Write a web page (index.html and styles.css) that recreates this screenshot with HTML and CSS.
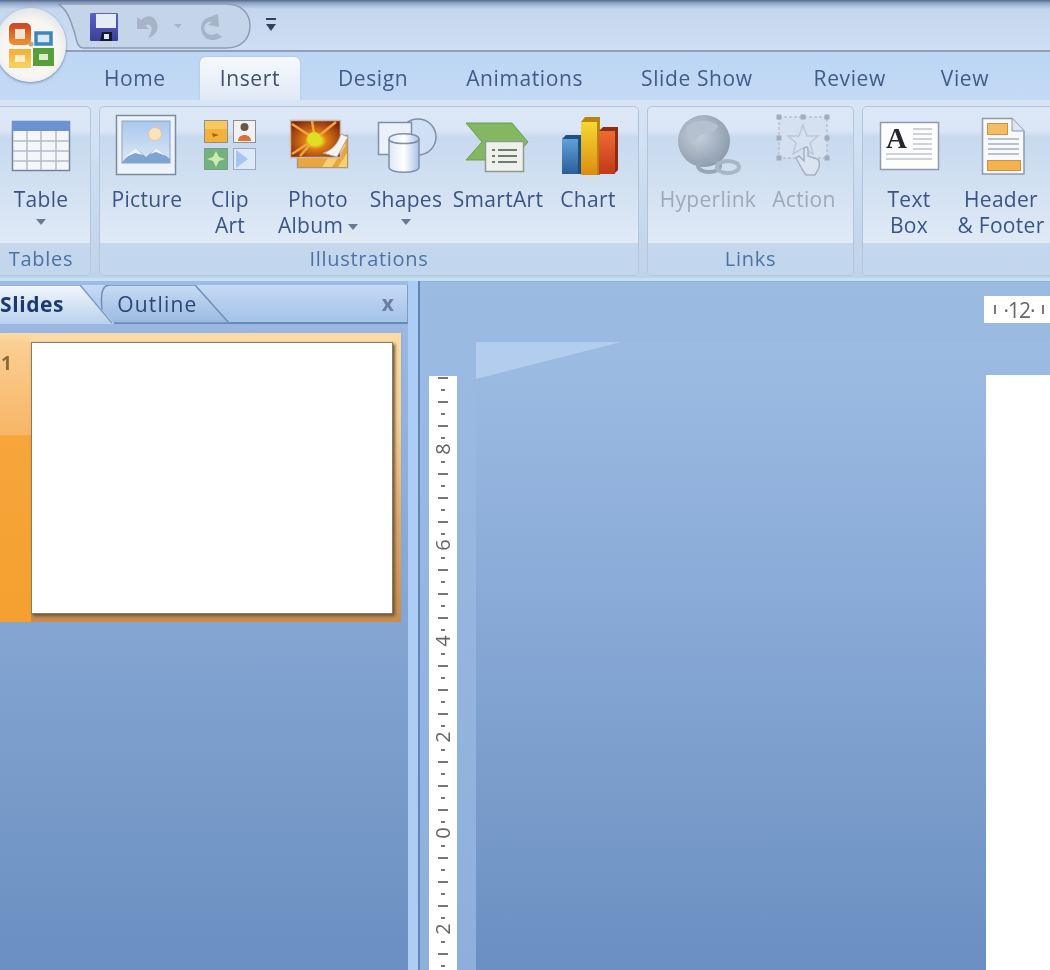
FILE: index.html
```html
<!DOCTYPE html>
<html lang="en">

<head>
    <meta charset="UTF-8">
    <title>Presentation - PowerPoint</title>
    <link rel="stylesheet" href="styles.css">
</head>

<body>
    <div class="app">
        <!-- title bar -->
        <div class="titlebar">
            <svg class="qat-shape" width="300" height="52" viewBox="0 0 300 52">
                <defs>
                    <linearGradient id="floppy" x1="0" y1="0" x2="0" y2="1">
                        <stop offset="0" stop-color="#5a62c4" />
                        <stop offset="1" stop-color="#3d3f96" />
                    </linearGradient>
                </defs>
                <path d="M58 4 H226 C242 4 250 14 250 26 C250 38 242 48 226 48 H84 C76 48 77 38 73 28 C70 18 66 8 58 4 Z" fill="#c4d5ea" stroke="#8c9cb4" stroke-width="1.5" />
                <!-- save -->
                <rect x="90" y="13" width="28" height="28" rx="1" fill="url(#floppy)" />
                <rect x="96" y="14" width="20" height="14" fill="#e6ecf6" />
                <path d="M100 41 L102 32 H112 V41 Z" fill="#15182e" />
                <rect x="104" y="34" width="5" height="5" fill="#dfe4ee" />
                <!-- undo -->
                <path d="M137 17 V29 H149 L145 25 C150 23 153 27 151 32 L148 38 C156 36 160 28 156 21 C153 15 146 15 141 20 Z" fill="#a7b4c7" />
                <path d="M174 24 H182 L178 28 Z" fill="#a9b6c8" />
                <!-- redo -->
                <path d="M218 14 L219 27 L208 25 L212 22 C206 21 203 26 205 31 C207 35 213 36 217 33 L222 37 C215 42 205 41 202 33 C199 25 203 18 210 17 Z" fill="#a7b4c7" />
                <!-- customize -->
                <rect x="266" y="18" width="10" height="2" fill="#33415c" />
                <path d="M266 24 H276 L271 31 Z" fill="#33415c" />
            </svg>
        </div>
        <div class="orb">
            <svg width="48" height="50" viewBox="0 0 48 50">
                <defs>
                    <linearGradient id="orbred" x1="0" y1="0" x2="0" y2="1">
                        <stop offset="0" stop-color="#cf4a26" />
                        <stop offset="1" stop-color="#ee8a2c" />
                    </linearGradient>
                    <linearGradient id="orbyel" x1="0" y1="0" x2="0" y2="1">
                        <stop offset="0" stop-color="#f3b23a" />
                        <stop offset="1" stop-color="#f6d05e" />
                    </linearGradient>
                </defs>
                <rect x="5" y="6" width="16" height="16" rx="2" fill="#f3e3d2" stroke="url(#orbred)" stroke-width="6" />
                <rect x="29" y="13" width="15" height="11" fill="#dbe8f1" stroke="#3f86bd" stroke-width="3.500" />
                <rect x="5" y="32" width="16" height="13" fill="#faeecb" stroke="url(#orbyel)" stroke-width="6" />
                <rect x="29" y="31" width="15" height="12" fill="#dcedcf" stroke="#55a03a" stroke-width="6" />
                <circle cx="24" cy="24" r="2.500" fill="#b6a58a" />
            </svg>
        </div>

        <div class="tabs">
            <span class="tab tab-home">Home</span>
            <span class="tab active">Insert</span>
            <span class="tab">Design</span>
            <span class="tab">Animations</span>
            <span class="tab">Slide Show</span>
            <span class="tab tab-review">Review</span>
            <span class="tab">View</span>
        </div>

        <!-- ribbon -->
        <div class="ribbon">
            <div class="group group-tables">
                <div class="buttons">
                    <div class="btn w82">
                        <svg class="ico" width="82" height="70" viewBox="0 110 82 70">
                            <rect x="12.500" y="121.500" width="57" height="49" fill="#f4f6f9" stroke="#76849a" stroke-width="1.500" />
                            <rect x="12" y="121" width="58" height="10" fill="#6b92d2" />
                            <path d="M27 131 V170 M41 131 V170 M56 131 V170 M13 141 H69 M13 151 H69 M13 161 H69" stroke="#b3bcc9" stroke-width="1.500" fill="none" />
                        </svg>
                        <div class="txt">Table</div>
                        <div class="arrow"></div>
                    </div>
                </div>
                <div class="label">Tables</div>
            </div>

            <div class="group group-illus">
                <div class="buttons">
                    <div class="btn w78">
                        <svg class="ico" width="78" height="70" viewBox="108 110 78 70">
                            <defs>
                                <linearGradient id="pic" x1="0" y1="0" x2="0" y2="1">
                                    <stop offset="0" stop-color="#a9c8ec" />
                                    <stop offset="1" stop-color="#dbe8f6" />
                                </linearGradient>
                            </defs>
                            <rect x="116.500" y="115.500" width="59" height="59" fill="#edf3fa" stroke="#7d8a9c" stroke-width="1.500" />
                            <rect x="122" y="121" width="48" height="42" fill="url(#pic)" stroke="#8da3bd" />
                            <circle cx="155" cy="134" r="6.500" fill="#f9e3c0" stroke="#eec48f" />
                            <path d="M122 162 L136 148 L146 157 L156 148 L170 159 V163 H122 Z" fill="#7fa4d4" />
                            <path d="M124 158 L136 148 L143 155 L135 153 Z M150 154 L156 148 L166 156 L156 152 Z" fill="#eef4fb" />
                        </svg>
                        <div class="txt">Picture</div>
                    </div>
                    <div class="btn w88">
                        <svg class="ico" width="88" height="70" viewBox="186 110 88 70">
                            <rect x="204.500" y="120.500" width="23" height="22" fill="#f3b13e" stroke="#8d8f88" />
                            <rect x="205" y="121" width="22" height="8" fill="#f8c862" />
                            <path d="M212 133 L219 135 L213 137 Z" fill="#b85a14" />
                            <rect x="233.500" y="120.500" width="22" height="22" fill="#f0f1f2" stroke="#8d8f88" />
                            <circle cx="244.500" cy="127" r="4" fill="#6b5347" />
                            <path d="M238 141 C238 133 251 133 251 141 Z" fill="#d9713a" />
                            <rect x="204.500" y="148.500" width="23" height="21" fill="#71b37c" stroke="#7f9a86" />
                            <path d="M216 151 L219 157 L225 159 L219 161 L216 167 L213 161 L207 159 L213 157 Z" fill="#cfe9b0" />
                            <rect x="233.500" y="148.500" width="22" height="21" fill="#dbe8f8" stroke="#9aa9bc" />
                            <path d="M236 150 L248 159 L236 168 Z" fill="#a8c5ec" />
                        </svg>
                        <div class="txt">Clip<br>Art</div>
                    </div>
                    <div class="btn w88">
                        <svg class="ico" width="88" height="70" viewBox="274 110 88 70">
                            <defs>
                                <radialGradient id="burst" cx="0.5" cy="0.55" r="0.7">
                                    <stop offset="0.18" stop-color="#dcdb22" />
                                    <stop offset="0.32" stop-color="#e07b16" />
                                    <stop offset="0.9" stop-color="#7e2410" />
                                </radialGradient>
                            </defs>
                            <rect x="297.500" y="135.500" width="50" height="32" fill="#e8a63c" stroke="#a99b78" stroke-width="1.500" />
                            <path d="M322 167 L340 140 L346 145 L332 167 Z M338 167 L347 153 V167 Z" fill="#f6cf6e" />
                            <rect x="290.500" y="120.500" width="50" height="37" fill="url(#burst)" stroke="#cdb9ac" stroke-width="1.500" />
                            <path d="M315 139 L292 124 M315 139 L312 121 M315 139 L336 122 M315 139 L292 154 M315 139 L300 156" stroke="#f0a73a" stroke-width="2.500" />
                            <circle cx="314" cy="139" r="7" fill="#dfdf24" />
                            <path d="M341 134 L348 137 L337 157 L323 153 C333 150 338 143 341 134 Z" fill="#f3f3f0" stroke="#a9a9a4" />
                        </svg>
                        <div class="txt">Photo<br>Album<i class="arrow-in"></i></div>
                    </div>
                    <div class="btn w88">
                        <svg class="ico" width="88" height="70" viewBox="362 110 88 70">
                            <defs>
                                <linearGradient id="cyl" x1="0" y1="0" x2="1" y2="0">
                                    <stop offset="0" stop-color="#dce8f6" />
                                    <stop offset="0.5" stop-color="#ffffff" />
                                    <stop offset="1" stop-color="#a6c2e6" />
                                </linearGradient>
                            </defs>
                            <circle cx="418" cy="137" r="18" fill="#cfe0f5" stroke="#808fa3" stroke-width="1.500" />
                            <rect x="378.500" y="122.500" width="33" height="32" fill="#eaf1fa" stroke="#808fa3" stroke-width="1.500" />
                            <path d="M389 139 C389 132 419 132 419 139 V167 C419 174 389 174 389 167 Z" fill="url(#cyl)" stroke="#808fa3" stroke-width="1.500" />
                            <path d="M389 139 C389 145 419 145 419 139" fill="none" stroke="#808fa3" stroke-width="1.500" />
                        </svg>
                        <div class="txt">Shapes</div>
                        <div class="arrow"></div>
                    </div>
                    <div class="btn w96">
                        <svg class="ico" width="96" height="70" viewBox="450 110 96 70">
                            <path d="M466 123 H512 L528 142 L512 160 H466 L482 142 Z" fill="#83b762" stroke="#6f9c55" />
                            <rect x="485.500" y="141.500" width="38" height="30" fill="#eef1ea" stroke="#8f9a8f" stroke-width="1.500" />
                            <path d="M492 150 H495 M498 150 H517 M492 156 H495 M498 156 H517 M492 162 H495 M498 162 H517" stroke="#6f7a74" stroke-width="2" />
                        </svg>
                        <div class="txt">SmartArt</div>
                    </div>
                    <div class="btn w84">
                        <svg class="ico" width="84" height="70" viewBox="546 110 84 70">
                            <defs>
                                <linearGradient id="bar1" x1="0" y1="0" x2="0" y2="1">
                                    <stop offset="0" stop-color="#5f9fdc" />
                                    <stop offset="1" stop-color="#2b5f96" />
                                </linearGradient>
                                <linearGradient id="bar2" x1="0" y1="0" x2="0" y2="1">
                                    <stop offset="0" stop-color="#f6d634" />
                                    <stop offset="1" stop-color="#dd8d10" />
                                </linearGradient>
                                <linearGradient id="bar3" x1="0" y1="0" x2="0" y2="1">
                                    <stop offset="0" stop-color="#ef6a32" />
                                    <stop offset="1" stop-color="#c2381a" />
                                </linearGradient>
                            </defs>
                            <path d="M562 139 L566 135 H582 V174 H562 Z" fill="#1f4f80" />
                            <rect x="562" y="139" width="16" height="35" fill="url(#bar1)" />
                            <path d="M581 122 L585 117 H600 V175 H581 Z" fill="#b8860c" />
                            <rect x="581" y="122" width="16" height="53" fill="url(#bar2)" />
                            <path d="M599 131 L603 127 H618 L618 170 L614 174 H599 Z" fill="#8f2c16" />
                            <rect x="599" y="131" width="16" height="43" fill="url(#bar3)" />
                        </svg>
                        <div class="txt">Chart</div>
                    </div>
                </div>
                <div class="label">Illustrations</div>
            </div>

            <div class="group group-links">
                <div class="buttons">
                    <div class="btn w104 off">
                        <svg class="ico" width="104" height="70" viewBox="654 110 104 70">
                            <defs>
                                <radialGradient id="globe" cx="0.4" cy="0.4" r="0.7">
                                    <stop offset="0" stop-color="#c7d0dc" />
                                    <stop offset="1" stop-color="#8796a9" />
                                </radialGradient>
                            </defs>
                            <circle cx="702" cy="141" r="26" fill="url(#globe)" />
                            <path d="M684 128 C692 120 708 118 716 126 C712 136 702 130 696 138 C692 146 688 140 684 128 Z" fill="#b6c1cf" />
                            <ellipse cx="707" cy="166" rx="11" ry="6" fill="none" stroke="#98a6b8" stroke-width="4" />
                            <ellipse cx="726" cy="167" rx="11" ry="6" fill="none" stroke="#a9b6c6" stroke-width="4" />
                        </svg>
                        <div class="txt">Hyperlink</div>
                    </div>
                    <div class="btn w88 off">
                        <svg class="ico" width="88" height="70" viewBox="758 110 88 70">
                            <rect x="777" y="117" width="48" height="41" fill="#d5e1f0" stroke="#a6b2c2" stroke-dasharray="3 2" />
                            <path d="M801 125 L805 136 L816 136 L808 143 L811 154 L801 148 L791 154 L794 143 L786 136 L797 136 Z" fill="none" stroke="#bcc8d7" stroke-width="1.500" />
                            <path d="M777 117 h.01 M801 117 h.01 M825 117 h.01 M777 138 h.01 M825 138 h.01 M777 158 h.01 M825 158 h.01" stroke="#a0adbe" stroke-width="5" stroke-linecap="square" />
                            <path d="M800 169 L794 158 L797 156 L802 161 V150 C802 146 806 146 806 150 V156 L815 159 C818 160 818 166 816 170 L813 175 H804 Z" fill="#dbe5f1" stroke="#a6b2c2" stroke-width="1.500" />
                        </svg>
                        <div class="txt">Action</div>
                    </div>
                </div>
                <div class="label">Links</div>
            </div>

            <div class="group group-text">
                <div class="buttons">
                    <div class="btn w76">
                        <svg class="ico" width="76" height="70" viewBox="870 110 76 70">
                            <rect x="879.500" y="122.500" width="58" height="47" fill="#fdfdfd" stroke="#8e9aab" stroke-width="1.500" />
                            <path d="M912 129 H931 M912 134 H931 M912 139 H931 M912 144 H931 M912 149 H931 M885 154 H931 M885 159 H931" stroke="#bfc5cd" stroke-width="1.500" />
                            <text x="885" y="148" class="big-a">A</text>
                        </svg>
                        <div class="txt">Text<br>Box</div>
                    </div>
                    <div class="btn w108">
                        <svg class="ico" width="104" height="70" viewBox="946 110 104 70">
                            <path d="M981.500 118.500 H1011 L1023 131 V174 H981.500 Z" fill="#f7f9fc" stroke="#8e9aab" stroke-width="1.500" />
                            <path d="M1011 118.500 V131 H1023" fill="#dfe6ef" stroke="#8e9aab" />
                            <path d="M987 139 H1018 M987 144 H1018 M987 149 H1018 M987 154 H1018" stroke="#a8afb9" stroke-width="1.500" />
                            <rect x="986.500" y="123.500" width="20" height="11" fill="#f4bd63" stroke="#c89344" />
                            <rect x="986.500" y="160.500" width="33" height="10" fill="#f4b251" stroke="#c89344" />
                        </svg>
                        <div class="txt">Header<br>&amp; Footer</div>
                    </div>
                </div>
                <div class="label"></div>
            </div>
        </div>

        <!-- slide panel and canvas -->
        <div class="work">
            <div class="panel">
                <div class="panel-head">
                    <svg class="panel-tabs" width="240" height="39" viewBox="0 0 240 39">
                        <defs>
                            <linearGradient id="tabon" x1="0" y1="0" x2="0" y2="1">
                                <stop offset="0" stop-color="#f2f7fd" />
                                <stop offset="1" stop-color="#b9d1ee" />
                            </linearGradient>
                            <linearGradient id="taboff" x1="0" y1="0" x2="0" y2="1">
                                <stop offset="0" stop-color="#c8dcf5" />
                                <stop offset="1" stop-color="#9ab8df" />
                            </linearGradient>
                        </defs>
                        <path d="M104 39 C103 30 100 20 102 8 C103 3 105 0 110 0 H195 L229 38 H114 Z" fill="url(#taboff)" stroke="#6f8fb9" stroke-width="1.500" />
                        <path d="M-2 0 H80 L114 38 V39 H-2 Z" fill="url(#tabon)" />
                        <path d="M0 0 H80 L112 38" fill="none" stroke="#7f9cc2" stroke-width="1.500" />
                    </svg>
                    <span class="ptab on">Slides</span>
                    <span class="ptab">Outline</span>
                    <span class="pclose">x</span>
                </div>
                <div class="thumb">
                    <div class="thumb-num"><span>1</span></div>
                    <div class="thumb-slide"></div>
                </div>
            </div>
            <div class="split"></div>
            <div class="main">
                <div class="hruler-row">
                    <div class="hruler"><i></i><span>·12·</span><i></i></div>
                </div>
                <div class="stage">
                    <div class="vruler-col">
                        <div class="vruler">
                            <div class="cell"><span>8</span></div>
                            <div class="cell"><span>6</span></div>
                            <div class="cell"><span>4</span></div>
                            <div class="cell"><span>2</span></div>
                            <div class="cell"><span>0</span></div>
                            <div class="cell"><span>2</span></div>
                        </div>
                    </div>
                    <div class="canvas">
                        <div class="page"></div>
                    </div>
                </div>
            </div>
        </div>
    </div>
</body>

</html>
```
FILE: styles.css
```css
* {
    margin: 0;
    padding: 0;
    box-sizing: border-box;
}

html,
body {
    width: 1050px;
    height: 970px;
    overflow: hidden;
}

body {
    font-family: "Open Sans", "Noto Sans", sans-serif;
    font-size: 21px;
    color: #3a5484;
    background: #9cbbe3;
}

/* the whole shot is soft, it was scaled up */
.app {
    position: relative;
    width: 1050px;
    height: 970px;
    display: flex;
    flex-direction: column;
    overflow: hidden;
    filter: blur(0.6px);
}

.titlebar {
    height: 52px;
    flex: none;
    background: linear-gradient(#55698a 0, #8fa5c6 3px, #c4d6ee 9px, #cfdff3 100%);
    border-bottom: 2px solid #8e9fb6;
}

.qat-shape {
    display: block;
}

.orb {
    position: absolute;
    left: -5px;
    top: 8px;
    width: 71px;
    height: 74px;
    border-radius: 50%;
    background: radial-gradient(circle at 50% 55%, #f8f6f2 52%, #dfe3e8 78%, #a8b4c4 100%);
    box-shadow: 0 1px 3px #7688a3;
    display: flex;
    align-items: center;
    justify-content: center;
}

.tabs {
    height: 48px;
    flex: none;
    display: flex;
    align-items: flex-end;
    gap: 18px;
    padding-left: 84px;
    background: linear-gradient(#bcd6f4, #c3daf5);
}

.tab {
    height: 43px;
    padding: 0 20px;
    line-height: 42px;
    letter-spacing: 0.6px;
    white-space: nowrap;
    color: #3f5c88;
}

.tab-home {
    margin-right: -4px;
}

.tab-review {
    margin: 0 -3px 0 3px;
}

.tab.active {
    background: linear-gradient(#f6f9fc, #dfeaf6);
    border-radius: 6px 6px 0 0;
    box-shadow: 0 0 2px #9db7d6;
    color: #3d4f6b;
}

.ribbon {
    height: 181px;
    flex: none;
    display: flex;
    gap: 8px;
    padding-top: 6px;
    background: linear-gradient(#d7e5f5, #bfd3ea 96%);
    border-bottom: 3px solid #c4e3f1;
    overflow: hidden;
}

.group {
    height: 170px;
    flex: none;
    display: flex;
    flex-direction: column;
    background: linear-gradient(#dce8f6 0, #dae6f5 14%, #c8d9ee 18%, #d3e1f2 50%, #e0eaf7 80%);
    border: 1px solid #b3c5db;
    border-radius: 5px;
    overflow: hidden;
}

.group-tables {
    width: 91px;
    border-left: 0;
    border-radius: 0 5px 5px 0;
}

.group-illus {
    width: 540px;
}

.group-links {
    width: 207px;
}

.group-text {
    width: 200px;
}

.buttons {
    height: 136px;
    flex: none;
    display: flex;
    padding-left: 8px;
    padding-top: 3px;
}

.group-tables .buttons {
    padding-left: 0;
}

.label {
    flex: 1;
    text-align: center;
    line-height: 31px;
    font-size: 20px;
    letter-spacing: 0.7px;
    color: #4f72a0;
    background: linear-gradient(#c4d7ed, #c2d6ee);
}

.group-tables .label {
    padding-right: 8px;
}

.btn {
    flex: none;
    text-align: center;
    line-height: 26px;
    letter-spacing: 0.3px;
}

.w76 { width: 76px; }
.w78 { width: 78px; }
.w82 { width: 82px; }
.w84 { width: 84px; }
.w88 { width: 88px; }
.w96 { width: 96px; }
.w104 { width: 104px; }
.w108 { width: 108px; }

.ico {
    display: block;
}

.txt {
    margin-top: 6px;
    white-space: nowrap;
}

.off .txt {
    color: #a0a9b5;
}

.arrow {
    width: 0;
    height: 0;
    margin: 7px auto 0;
    border: 5px solid transparent;
    border-top: 6px solid #6a7a91;
    border-bottom: 0;
}

.arrow-in {
    display: inline-block;
    vertical-align: middle;
    width: 0;
    height: 0;
    margin-left: 5px;
    border: 5px solid transparent;
    border-top: 6px solid #6a7a91;
    border-bottom: 0;
}

.big-a {
    font-family: "Liberation Serif", serif;
    font-size: 29px;
    font-weight: bold;
    fill: #26282c;
}

.work {
    flex: 1;
    display: flex;
    min-height: 0;
}

.panel {
    width: 408px;
    flex: none;
    padding-top: 4px;
    background: linear-gradient(#9dbbe4 0, #84a5d2 50%, #6a8fc0 100%);
}

.panel-head {
    position: relative;
    height: 39px;
    display: flex;
    align-items: center;
    background: linear-gradient(#c5daf5, #a5c2e7);
    border-bottom: 2px solid #6a8ab6;
    border-right: 1px solid #7c9cc6;
}

.panel-tabs {
    position: absolute;
    left: 0;
    top: 0;
}

.ptab {
    position: relative;
    color: #2a4678;
    margin-left: 53px;
    letter-spacing: 1.2px;
}

.ptab.on {
    margin-left: 0;
    font-weight: bold;
    letter-spacing: 0.6px;
    color: #1d3a6e;
}

.pclose {
    position: relative;
    margin-left: auto;
    margin-right: 13px;
    font-weight: bold;
    color: #6c80a2;
    line-height: 1;
}

.thumb {
    height: 289px;
    width: 401px;
    margin-top: 9px;
    padding-top: 9px;
    display: flex;
    background:
        linear-gradient(#c68d52, #c68d52) 30px 100% / 100% 8px no-repeat,
        linear-gradient(#fbdca8 0, #f5d09c 30%, #d9a56c 70%, #c68d52 100%);
    box-shadow: 0 1px 2px #8ca3c5;
}

.thumb-num {
    width: 31px;
    margin-top: -9px;
    background: linear-gradient(#fcdca8 0, #fbcf93 3%, #f7b566 35.400%, #f6a63a 35.500%, #f4a030 100%);
    font-size: 19px;
    font-weight: bold;
    color: #8a6b3a;
}

.thumb-num span {
    display: block;
    margin: 17px 0 0 1px;
}

.thumb-slide {
    width: 362px;
    height: 272px;
    background: #fff;
    border: 1px solid #8a7b60;
    box-shadow: 2px 2px 3px #6a5535;
}

.split {
    width: 12px;
    flex: none;
    background: #aecdf4;
    border-right: 2px solid #5f86bb;
}

.main {
    flex: 1;
    min-width: 0;
    display: flex;
    flex-direction: column;
    background: linear-gradient(#9cbbe3, #8eafdc);
    border-top: 1px solid #8fb0d4;
}

.hruler-row {
    height: 60px;
    flex: none;
    padding-top: 14px;
    display: flex;
    justify-content: flex-end;
}

.hruler {
    width: 66px;
    height: 27px;
    display: flex;
    align-items: center;
    justify-content: space-between;
    padding: 0 6px 0 10px;
    background: #fff;
    font-size: 21px;
    color: #666;
}

.hruler span {
    letter-spacing: -1px;
}

.hruler i {
    width: 2px;
    height: 9px;
    background: #777;
}

.stage {
    flex: 1;
    display: flex;
    min-height: 0;
}

.vruler-col {
    width: 56px;
    flex: none;
    padding: 34px 0 0 9px;
}

.vruler {
    width: 28px;
    height: 700px;
    padding-top: 25px;
    background-color: #fff;
    background-image:
        linear-gradient(#777 2px, transparent 2px),
        linear-gradient(#777 2px, transparent 2px);
    background-repeat: repeat-y;
    background-size: 10px 24px, 4px 24px;
    background-position: 9px 1px, 12px 13px;
}

.cell {
    height: 96px;
    display: flex;
    align-items: center;
    justify-content: center;
}

.cell span {
    display: block;
    width: 20px;
    height: 16px;
    line-height: 16px;
    text-align: center;
    font-size: 20px;
    color: #666;
    background: #fff;
    transform: rotate(-90deg);
}

.canvas {
    position: relative;
    flex: 1;
    padding: 33px 0 0 510px;
    background: linear-gradient(#9dbce3 0, #8fafdb 30%, #6a8fc0 100%);
    overflow: hidden;
}

.canvas::before {
    content: "";
    position: absolute;
    left: 0;
    top: 0;
    width: 145px;
    height: 37px;
    background: #b3cdee;
    clip-path: polygon(0 0, 100% 0, 0 100%);
}

.page {
    height: 100%;
    background: #fff;
}
```
